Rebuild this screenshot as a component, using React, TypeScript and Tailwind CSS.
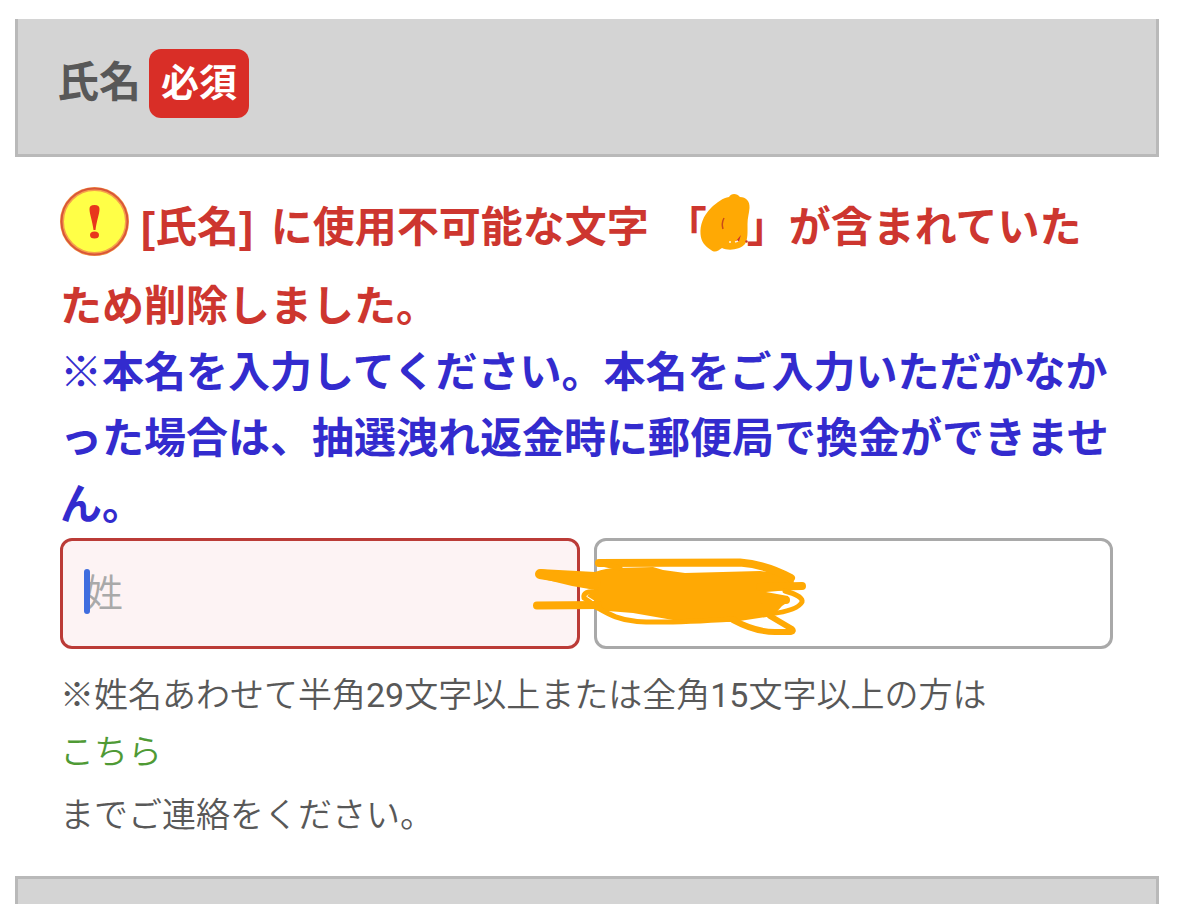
import React from "react";

function AlertIcon() {
  return (
    <svg
      viewBox="0 0 69 69"
      className="mr-3 mb-[18px] inline-block h-[69px] w-[69px] align-middle"
      role="img"
      aria-label="エラー"
    >
      <circle cx="34.5" cy="34.5" r="32.5" fill="#ffff47" stroke="#f5a04a" strokeWidth="4" />
      <circle cx="34.5" cy="34.5" r="33" fill="none" stroke="#d9553a" strokeWidth="2" />
      <path
        d="M29.5 22C29.5 19.5 31 18 34.5 18S39.500 19.500 39.500 22C39.500 27 36.500 34 35.500 43H33.500C32.500 34 29.500 27 29.500 22Z"
        fill="#e8361c"
      />
      <ellipse cx="34.5" cy="48" rx="4.5" ry="3.6" fill="#e8361c" />
    </svg>
  );
}

function MaskedCharacter() {
  return (
    <span className="relative inline-block w-10">
      &nbsp;
      <svg
        viewBox="0 0 52 60"
        className="absolute -top-0.5 -left-2 h-[60px] w-[52px]"
        aria-hidden="true"
      >
        <path
          d="M30 4C32 0 38 0 41 4C47 4 51 8 50.500 15C50 21 48.500 25 48.500 31C48.500 39 49 46 46 51C41 57 29 58 23 55C19 58 16 60 12 57C6 53 2 49 1.500 41C1 32 4 23 12 15C18 9 24 5 30 4Z"
          fill="#ffa904"
        />
        <path d="M25 25C23 29 23 33 24 36" fill="none" stroke="#c84b18" strokeWidth="1.500" />
        <path d="M37 48L42 42L40 48Z" fill="#c9352b" />
        <path d="M36 49L39 48M30 49H32" stroke="#fff1dc" strokeWidth="1.500" />
        <circle cx="47.500" cy="48.500" r="1.200" fill="#c9352b" />
      </svg>
    </span>
  );
}

function Scribble() {
  return (
    <svg
      viewBox="0 0 276 84"
      className="pointer-events-none absolute top-[18px] -left-[62px] h-[84px] w-[276px]"
      aria-hidden="true"
    >
      <g fill="none" stroke="#ffa904" strokeLinecap="round" strokeLinejoin="round">
        <path
          d="M8 13L45 15L63 16Q74 12 85 12L121 11L131 14L153 17L228 15L257 18L262 26L258 34L234 36L256 40L256 46L250 50L241 60L201 66L141 64L101 57L63 54L63 45L55 40L63 34L40 30L7 22Z"
          fill="#ffa904"
          stroke="none"
        />
        <path d="M8 18L64 27" strokeWidth="10" />
        <path d="M5 49.500L66 49" strokeWidth="8" />
        <path d="M67 7L208 6.500C228 8 246 15 259 22" strokeWidth="8" />
        <path d="M66 7L88 12" strokeWidth="5" />
        <path d="M228 31L270 30" strokeWidth="8" />
        <path d="M253 35C264 38 271 42 270 46C267 52 254 56 238 58" strokeWidth="5" />
        <path d="M66 52C78 59 88 64 105 65.500C125 67 155 66 202 63" strokeWidth="5" />
        <path d="M201 64C216 72 228 76 243 76H259Q262 75 260 73L238 60" strokeWidth="6" />
        <path d="M64 36C55 35 51 37 52 42L58 46" strokeWidth="5" />
        <path d="M232 44L254 44" strokeWidth="8" />
      </g>
    </svg>
  );
}

function Digits({ children }: { children: string }) {
  return <span className="font-['Roboto',sans-serif] font-normal">{children}</span>;
}

export default function App() {
  return (
    <main
      lang="ja"
      className="min-h-screen bg-white pt-[19px] pr-5 pl-[15px] font-['Liberation_Sans','Noto_Sans_CJK_JP',sans-serif] text-[#585858]"
    >
      <header className="flex items-start gap-2 border-x-[3px] border-b-[3px] border-[#b9b9b9] bg-[#d4d4d4] px-[39px] pt-[30px] pb-9">
        <h2 className="text-[42px] leading-[68px] font-bold">氏名</h2>
        <span className="rounded-xl bg-[#d92e27] px-3 text-[38px] leading-[69px] font-bold text-white">
          必須
        </span>
      </header>

      <form className="pt-[30px] pr-[46px] pb-[31px] pl-[45px]">
        <div className="text-[42px] leading-[66px] font-bold">
          <p className="text-[#cd362f]" role="alert">
            <AlertIcon />
            <span className="mr-1.5">[氏名]</span> に使用不可能な文字　
            <span className="ml-4">「</span>
            <MaskedCharacter />
            」が含まれていたため削除しました。
          </p>
          <p className="text-[#332bce] [line-break:loose]">
            ※本名を入力してください。本名をご入力いただかなかった場合は、抽選洩れ返金時に郵便局で換金ができません。
          </p>
        </div>

        <div className="grid grid-cols-2 gap-[14px]">
          <div className="relative">
            <input
              type="text"
              aria-label="姓"
              placeholder="姓"
              className="block h-[111px] w-full rounded-xl border-[3px] border-[#bb3b37] bg-[#fdf3f4] px-[22px] text-[38px] font-[350] outline-none placeholder:text-[#a9a9a9] placeholder:opacity-100"
            />
            <span className="absolute top-[31px] left-6 h-[45px] w-[6px] rounded-full bg-[#3f6ddf]" />
          </div>
          <div className="relative">
            <input
              type="text"
              aria-label="名"
              className="block h-[111px] w-full rounded-xl border-[3px] border-[#a9a9a9] bg-white px-[22px] text-[38px] font-[350] outline-none"
            />
            <Scribble />
          </div>
        </div>

        <div className="pt-4 font-['Roboto','Noto_Sans_CJK_JP',sans-serif] text-[34px] leading-[60px] font-[350]">
          <p>
            ※姓名あわせて半角<Digits>29</Digits>文字以上または全角<Digits>15</Digits>文字以上の方は
          </p>
          <a href="#contact" className="block leading-[54px] text-[#4f9a35]">
            こちら
          </a>
          <p className="pt-1.5">までご連絡をください。</p>
        </div>
      </form>

      <div className="h-7 border-x-[3px] border-t-[3px] border-[#b9b9b9] bg-[#d4d4d4]" />
    </main>
  );
}
